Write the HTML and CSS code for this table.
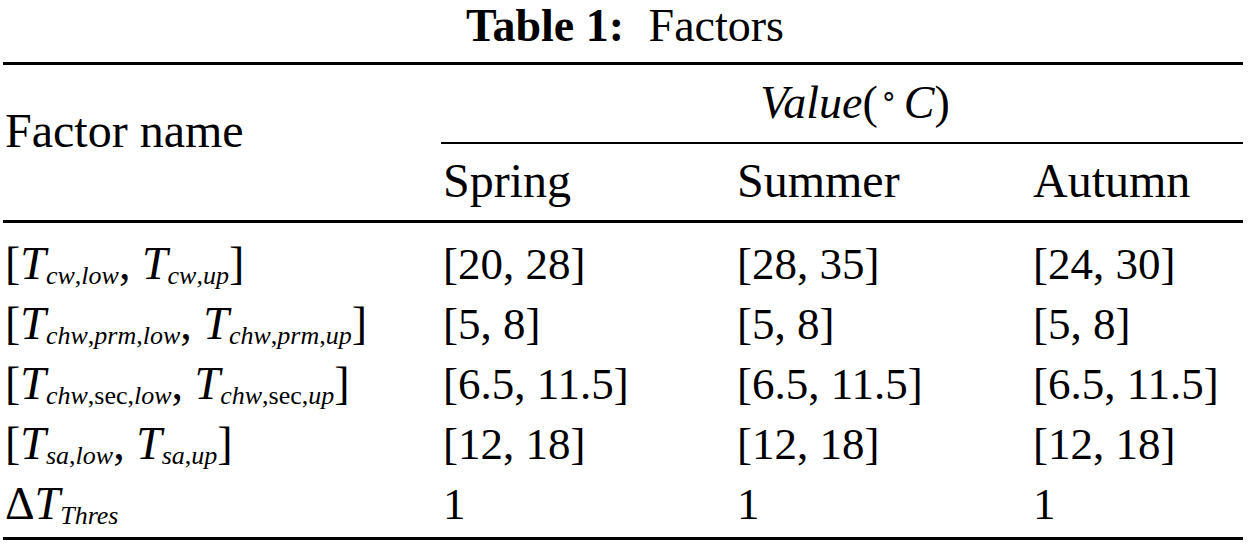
FILE: index.html
```html
<!DOCTYPE html>
<html lang="en">
<head>
  <meta charset="UTF-8" />
  <title>Table 1: Factors</title>
  <link rel="stylesheet" href="styles.css">
</head>
<body>

  <!-- Caption -->
  <div class="caption"><b>Table 1:</b> Factors</div>

  <!-- Factor table -->
  <table class="factors">
    <colgroup>
      <col class="c-name">
      <col class="c-spring">
      <col class="c-summer">
      <col class="c-autumn">
    </colgroup>
    <thead>
      <tr class="group">
        <th class="name" rowspan="2">Factor name</th>
        <th class="value" colspan="3"><i>Value</i>(<sup class="deg">∘</sup><i>C</i>)</th>
      </tr>
      <tr class="seasons">
        <th>Spring</th>
        <th>Summer</th>
        <th>Autumn</th>
      </tr>
    </thead>
    <tbody>
      <tr class="first">
        <td class="math">[<i>T</i><sub><i>cw</i>,<i>low</i></sub>, <i>T</i><sub><i>cw</i>,<i>up</i></sub>]</td>
        <td>[20, 28]</td>
        <td>[28, 35]</td>
        <td>[24, 30]</td>
      </tr>
      <tr>
        <td class="math">[<i>T</i><sub><i>chw</i>,<i>prm</i>,<i>low</i></sub>, <i>T</i><sub><i>chw</i>,<i>prm</i>,<i>up</i></sub>]</td>
        <td>[5, 8]</td>
        <td>[5, 8]</td>
        <td>[5, 8]</td>
      </tr>
      <tr>
        <td class="math">[<i>T</i><sub><i>chw</i>,sec,<i>low</i></sub>, <i>T</i><sub><i>chw</i>,sec,<i>up</i></sub>]</td>
        <td>[6.5, 11.5]</td>
        <td>[6.5, 11.5]</td>
        <td>[6.5, 11.5]</td>
      </tr>
      <tr>
        <td class="math">[<i>T</i><sub><i>sa</i>,<i>low</i></sub>, <i>T</i><sub><i>sa</i>,<i>up</i></sub>]</td>
        <td>[12, 18]</td>
        <td>[12, 18]</td>
        <td>[12, 18]</td>
      </tr>
      <tr class="last">
        <td class="math">Δ<i>T</i><sub><i>Thres</i></sub></td>
        <td>1</td>
        <td>1</td>
        <td>1</td>
      </tr>
    </tbody>
  </table>

</body>
</html>
```

FILE: styles.css
```css
body {
  margin: 0;
  background: #fff;
  color: #000;
  font-family: "Liberation Serif", "Times New Roman", serif;
}

.caption {
  font-size: 46px;
  line-height: 51px;
  text-align: center;
  margin-bottom: 11px;
}

.caption b {
  margin-right: 13px;
}

.factors {
  margin-left: 3px;
  width: 1240px;
  table-layout: fixed;
  border-collapse: separate;
  border-spacing: 0;
  font-size: 45px;
}

.c-name   { width: 438px; }
.c-spring { width: 294px; }
.c-summer { width: 296px; }
.c-autumn { width: 212px; }

.factors th,
.factors td {
  padding: 0 0 0 2px;
  line-height: 60px;
  font-weight: normal;
  text-align: left;
  vertical-align: top;
  white-space: nowrap;
}

/* header rows */
.group th {
  border-top: 3px solid #000;
}

.factors th.name {
  font-size: 48px;
  padding-top: 35.8px;
  border-bottom: 3px solid #000;
}

.factors th.value {
  font-size: 46px;
  text-align: center;
  padding: 7.5px 0 9.5px 26px;
  border-bottom: 2px solid #000;
}

.factors .seasons th {
  font-size: 48px;
  padding-top: 6.8px;
  padding-bottom: 9.2px;
  border-bottom: 3px solid #000;
}

.deg {
  font-size: 28px;
  line-height: 0;
  vertical-align: 14px;
  margin: 0 6px 0 2px;
}

/* body rows */
.factors td.math {
  font-size: 46px;
}

.factors .first td {
  padding-top: 11.5px;
}

.factors .last td {
  padding-bottom: 3px;
  border-bottom: 3px solid #000;
}

.factors sub {
  font-size: 26px;
  line-height: 0;
  vertical-align: -5px;
}
```
